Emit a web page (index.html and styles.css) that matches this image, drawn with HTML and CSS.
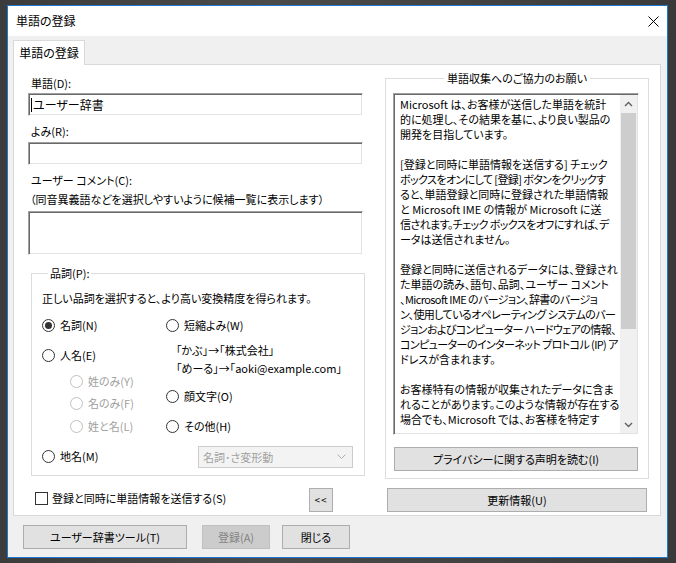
FILE: index.html
```html
<!DOCTYPE html>
<html lang="ja">
<head>
<meta charset="utf-8">
<title>単語の登録</title>
<link rel="stylesheet" href="styles.css">
</head>
<body>
<div class="window">
  <div class="titlebar">
    <span class="title">単語の登録</span>
    <svg class="close" width="11" height="11" viewBox="0 0 11 11"><path d="M0.5 0.5 L10.5 10.5 M10.5 0.5 L0.5 10.5" stroke="#000" stroke-width="1" fill="none"/></svg>
  </div>
  <div class="client">
    <div class="tabs"><div class="tab">単語の登録</div></div>
    <div class="panel">
      <div class="left">
        <div class="lbl l1">単語(D):</div>
        <div class="edit e1"><span class="caret"></span>ユーザー辞書</div>
        <div class="lbl l2">よみ(R):</div>
        <div class="edit e2"></div>
        <div class="lbl l3">ユーザー コメント(C):</div>
        <div class="lbl l4">（同音異義語などを選択しやすいように候補一覧に表示します）</div>
        <div class="edit memo"></div>
        <fieldset class="group pos">
          <legend>品詞(P):</legend>
          <div class="desc">正しい品詞を選択すると、より高い変換精度を得られます。</div>
          <div class="opts">
            <div class="col-a">
              <div class="opt o-noun"><span class="radio on"></span>名詞(N)</div>
              <div class="opt o-person"><span class="radio"></span>人名(E)</div>
              <div class="opt sub o-s1 dis"><span class="radio"></span>姓のみ(Y)</div>
              <div class="opt sub o-s2 dis"><span class="radio"></span>名のみ(F)</div>
              <div class="opt sub o-s3 dis"><span class="radio"></span>姓と名(L)</div>
              <div class="opt o-place"><span class="radio"></span>地名(M)</div>
            </div>
            <div class="col-b">
              <div class="opt o-short"><span class="radio"></span>短縮よみ(W)</div>
              <div class="ex ex1">「かぶ」→「株式会社」</div>
              <div class="ex ex2">「めーる」→「aoki@example.com」</div>
              <div class="opt o-face"><span class="radio"></span>顔文字(O)</div>
              <div class="opt o-other"><span class="radio"></span>その他(H)</div>
              <div class="combo"><span>名詞･さ変形動</span>
                <svg width="9" height="6" viewBox="0 0 9 6"><path d="M0.5 0.5 L4.5 4.5 L8.5 0.5" stroke="#b0b0b0" fill="none"/></svg>
              </div>
            </div>
          </div>
        </fieldset>
      </div>
      <div class="right">
        <fieldset class="group info">
          <legend>単語収集へのご協力のお願い</legend>
          <div class="textbox">
            <div class="text">Microsoft は、お客様が送信した単語を統計<br>的に処理し、その結果を基に、より良い製品の<br>開発を目指しています。<br><br>[登録と同時に単語情報を送信する] チェック<br><span class="tight">ボックスをオンにして [登録] ボタンをクリックす</span><br>ると、単語登録と同時に登録された単語情報<br>と Microsoft IME の情報が Microsoft に送<br><span class="tight">信されます。チェック ボックスをオフにすれば、デ</span><br>ータは送信されません。<br><br>登録と同時に送信されるデータには、登録され<br>た単語の読み、語句、品詞、ユーザー コメント<br><span class="tight">、Microsoft IME のバージョン、辞書のバージョ</span><br><span class="tight">ン、使用しているオペレーティング システムのバー</span><br><span class="tight">ジョンおよびコンピューター ハードウェアの情報、</span><br><span class="tight">コンピューターのインターネット プロトコル (IP) ア</span><br>ドレスが含まれます。<br><br>お客様特有の情報が収集されたデータに含ま<br>れることがあります。このような情報が存在する<br>場合でも、Microsoft では、お客様を特定す</div>
            <div class="vscroll">
              <div class="arrow"><svg width="9" height="6" viewBox="0 0 9 6"><path d="M1 5 L4.5 1.5 L8 5" stroke="#606060" stroke-width="1.4" fill="none"/></svg></div>
              <div class="track"><div class="thumb"></div></div>
              <div class="arrow"><svg width="9" height="6" viewBox="0 0 9 6"><path d="M1 1 L4.5 4.5 L8 1" stroke="#606060" stroke-width="1.4" fill="none"/></svg></div>
            </div>
          </div>
          <button class="btn privacy">プライバシーに関する声明を読む(I)</button>
        </fieldset>
      </div>
      <div class="left-foot">
        <label class="chk"><span class="check"></span>登録と同時に単語情報を送信する(S)</label>
        <button class="btn collapse">&lt;&lt;</button>
      </div>
      <div class="right-foot">
        <button class="btn update">更新情報(U)</button>
      </div>
    </div>
    <div class="footer">
      <button class="btn tool">ユーザー辞書ツール(T)</button>
      <button class="btn reg" disabled>登録(A)</button>
      <button class="btn closebtn">閉じる</button>
    </div>
  </div>
</div>
</body>
</html>
```

FILE: styles.css
```css
html, body {
  margin: 0;
}
body {
  width: 676px;
  height: 563px;
  overflow: hidden;
  box-sizing: border-box;
  padding: 5px 0 0 7px;
  background: linear-gradient(90deg, #3c3c3c 0, #4a4a4a 40%, #3a3a3a 100%);
  font-family: "Noto Sans CJK JP", "Noto Sans", sans-serif;
  font-size: 11px;
  font-feature-settings: "palt";
  color: #000;
}
.window {
  width: 661px;
  height: 553px;
  box-sizing: border-box;
  border: 1px solid #1b79d2;
  background: #f0f0f0;
  display: flex;
  flex-direction: column;
}
.titlebar {
  height: 30px;
  flex: none;
  background: #fff;
  display: flex;
  align-items: center;
  justify-content: space-between;
  padding: 0 8px 0 8px;
}
.title {
  font-size: 12px;
  line-height: 30px;
}
.client {
  flex: 1;
  padding: 4px 6px 0 5px;
}
.tabs {
  display: flex;
}
.tab {
  position: relative;
  z-index: 1;
  width: 72px;
  height: 25px;
  box-sizing: border-box;
  margin-bottom: -1px;
  border: 1px solid #d9d9d9;
  border-bottom: none;
  background: #fff;
  text-align: center;
  font-size: 12px;
  line-height: 24px;
}
.panel {
  height: 452px;
  box-sizing: border-box;
  border: 1px solid #d9d9d9;
  background: #fff;
  display: grid;
  grid-template-columns: 337px 264px;
  column-gap: 20px;
  align-items: start;
  padding: 0 10px 0 14px;
}
.lbl {
  height: 16px;
  line-height: 16px;
  white-space: nowrap;
}
.l1 { margin-top: 10px; padding-left: 3px; }
.l2 { margin-top: 7px; padding-left: 3px; }
.l3 { margin-top: 7px; padding-left: 3px; }
.l4 { margin-top: 3px; padding-left: 2px; }
.edit {
  box-sizing: border-box;
  width: 335px;
  height: 23px;
  border: 1px solid;
  border-color: #a0a0a0 #fff #fff #a0a0a0;
  box-shadow: inset 1px 1px 0 #696969, inset -1px -1px 0 #e3e3e3;
  background: #fff;
  display: flex;
  align-items: center;
  padding-left: 2px;
  line-height: 16px;
  font-size: 12px;
}
.e1 { margin-top: 2px; }
.e2 { margin-top: 3px; }
.memo { margin-top: 4px; height: 44px; }
.caret {
  width: 1px;
  height: 14px;
  background: #000;
  margin-right: 1px;
}
.group {
  margin: 0;
  padding: 0;
  border: 1px solid #dcdcdc;
  min-width: 0;
}
.group legend {
  line-height: 16px;
  height: 16px;
  padding: 0 2px;
}
.pos {
  margin-top: 10px;
  margin-left: 3px;
  width: 334px;
  box-sizing: border-box;
  padding: 0 0 7px 10px;
}
.pos legend {
  margin-left: 6px;
}
.desc {
  margin-top: 9px;
  height: 16px;
  line-height: 16px;
  white-space: nowrap;
}
.opts {
  display: flex;
}
.col-a {
  width: 124px;
}
.opt {
  display: flex;
  align-items: center;
  gap: 5px;
  height: 16px;
  line-height: 16px;
  white-space: nowrap;
}
.opt.sub { padding-left: 28px; }
.opt.dis { color: #a0a0a0; }
.radio {
  flex: none;
  width: 13px;
  height: 13px;
  box-sizing: border-box;
  border: 1px solid #333;
  border-radius: 50%;
  background: #fff;
  position: relative;
}
.radio.on::after {
  content: "";
  position: absolute;
  left: 2px;
  top: 2px;
  width: 7px;
  height: 7px;
  border-radius: 50%;
  background: #333;
}
.opt.dis .radio { border-color: #c0c0c0; }
.o-noun { margin-top: 11px; }
.o-person { margin-top: 14px; }
.o-s1 { margin-top: 10px; }
.o-s2 { margin-top: 6px; }
.o-s3 { margin-top: 7px; }
.o-place { margin-top: 14px; }
.o-short { margin-top: 11px; }
.ex {
  height: 16px;
  line-height: 16px;
  white-space: nowrap;
  padding-left: 10px;
}
.ex1 { margin-top: 9px; }
.ex2 { margin-top: 2px; }
.o-face { margin-top: 12px; }
.o-other { margin-top: 14px; }
.combo {
  margin-top: 12px;
  margin-left: 32px;
  width: 155px;
  height: 22px;
  box-sizing: border-box;
  border: 1px solid #cccccc;
  background: #f3f3f3;
  color: #a0a0a0;
  display: flex;
  align-items: center;
  justify-content: space-between;
  padding: 0 6px 0 4px;
}
.right {
  margin-top: 5px;
}
.info {
  width: 264px;
  box-sizing: border-box;
  padding: 0 0 7px 0;
}
.info legend {
  margin: 0 auto;
  padding: 0 3px;
}
.textbox {
  margin: 7px 0 0 7px;
  width: 246px;
  height: 342px;
  box-sizing: border-box;
  border: 1px solid;
  border-color: #a0a0a0 #fff #fff #a0a0a0;
  box-shadow: inset 1px 1px 0 #696969, inset -1px -1px 0 #e3e3e3;
  padding: 1px;
  display: flex;
  background: #fff;
}
.text {
  flex: 1;
  overflow: hidden;
  white-space: nowrap;
  line-height: 15px;
  padding: 2px 0 0 5px;
}
.text .tight {
  letter-spacing: -0.6px;
}
.vscroll {
  width: 17px;
  flex: none;
  background: #f0f0f0;
  display: flex;
  flex-direction: column;
}
.arrow {
  height: 17px;
  display: flex;
  align-items: center;
  justify-content: center;
}
.track {
  flex: 1;
}
.thumb {
  margin: 1px 1px 0 1px;
  height: 216px;
  background: #cdcdcd;
}
.btn {
  display: block;
  height: 24px;
  box-sizing: border-box;
  border: 1px solid #adadad;
  background: #e1e1e1;
  font: inherit;
  color: #000;
  padding: 0;
  line-height: 20px;
  white-space: nowrap;
}
.btn:disabled {
  background: #cccccc;
  border-color: #bfbfbf;
  color: #838383;
}
.privacy {
  margin: 12px 0 0 8px;
  width: 244px;
}
.left-foot {
  margin-top: 6px;
  display: flex;
  align-items: flex-start;
  padding-left: 7px;
  padding-right: 32px;
}
.chk {
  margin-top: 2px;
  display: flex;
  align-items: center;
  gap: 4px;
  height: 16px;
  line-height: 16px;
  white-space: nowrap;
}
.check {
  width: 13px;
  height: 13px;
  box-sizing: border-box;
  border: 1px solid #333;
  background: #fff;
}
.collapse {
  margin-left: auto;
  width: 24px;
  font-size: 10px;
  letter-spacing: 1px;
}
.right-foot {
  margin-top: 6px;
  padding-left: 2px;
}
.update {
  width: 260px;
}
.footer {
  margin-top: 9px;
  display: flex;
  padding-left: 10px;
}
.tool { width: 164px; }
.reg { width: 68px; margin-left: 15px; }
.closebtn { width: 68px; margin-left: 12px; }
```
